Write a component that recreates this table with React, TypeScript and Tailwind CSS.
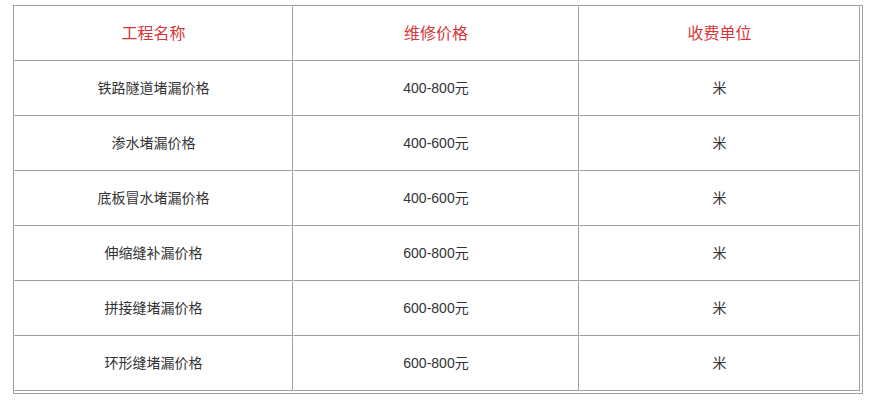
import React from 'react';

const rows = [
  ['铁路隧道堵漏价格', '400-800元', '米'],
  ['渗水堵漏价格', '400-600元', '米'],
  ['底板冒水堵漏价格', '400-600元', '米'],
  ['伸缩缝补漏价格', '600-800元', '米'],
  ['拼接缝堵漏价格', '600-800元', '米'],
  ['环形缝堵漏价格', '600-800元', '米'],
];

const headers = ['工程名称', '维修价格', '收费单位'];

const cell = 'flex items-center justify-center h-[55px] border-l border-t border-l-white border-t-white border-r border-b border-r-[#a0a0a0] border-b-[#a0a0a0]';

export default function App() {
  return (
    <div className="min-h-[407px] w-[889px] bg-white pt-[5px] pl-[13px]" style={{ fontFamily: '"Liberation Sans", "Noto Sans CJK SC", sans-serif' }}>
      <div className="w-[850px] h-[389px] border border-[#a0a0a0] pr-[2px] pb-[2px]">
        <div className="grid grid-cols-[279px_286px_281px]">
          {headers.map((h) => (
            <div key={h} className={`${cell} text-[16px] text-[#d4373a]`}>{h}</div>
          ))}
          {rows.map((r, i) =>
            r.map((c, j) => (
              <div key={`${i}-${j}`} className={`${cell} text-[14px] text-[#333]`}>{c}</div>
            ))
          )}
        </div>
      </div>
    </div>
  );
}
